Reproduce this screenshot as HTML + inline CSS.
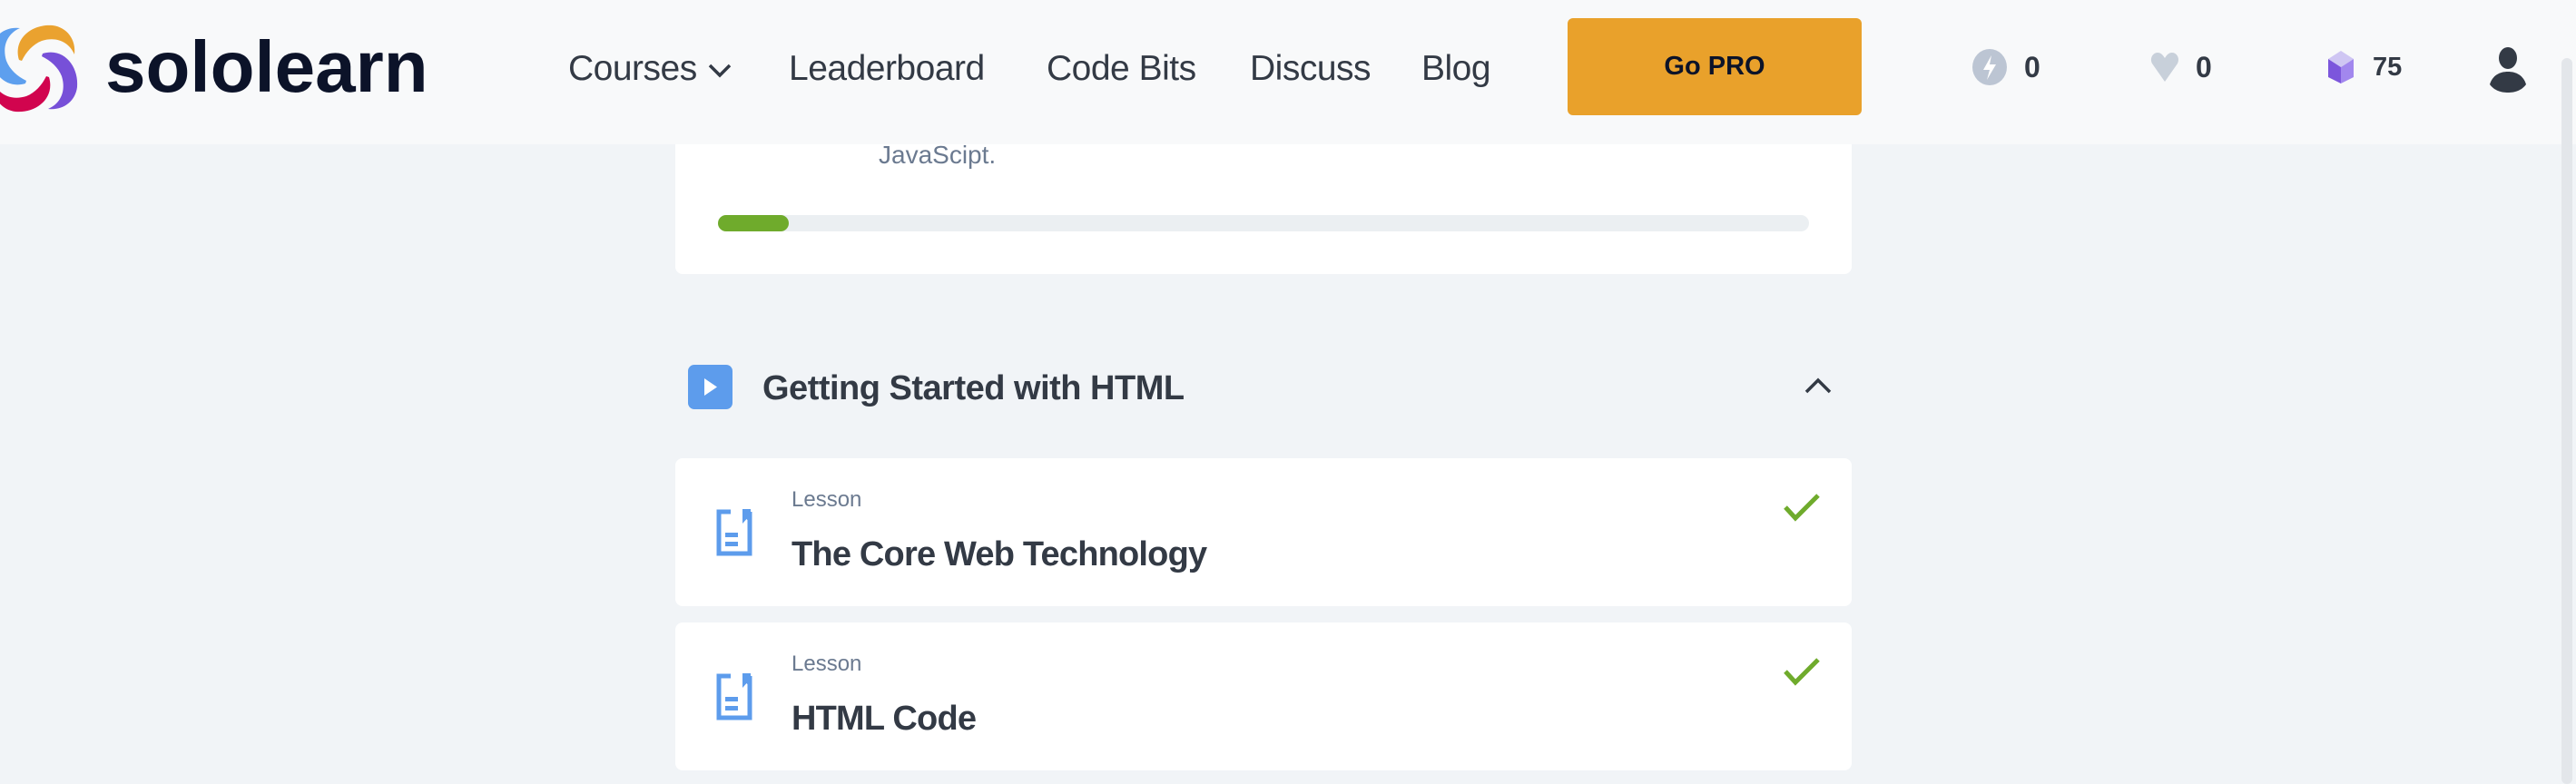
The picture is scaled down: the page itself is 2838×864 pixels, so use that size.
<!DOCTYPE html>
<html><head><meta charset="utf-8"><style>
*{margin:0;padding:0;box-sizing:border-box}
body{width:2838px;height:862px;overflow:hidden;background:#f1f4f7;font-family:"Liberation Sans",sans-serif;position:relative}
.hdr{position:absolute;left:0;top:0;width:2838px;height:159px;background:#f8f9fa}
.abs{position:absolute}
.nav{position:absolute;top:54px;font-size:39px;color:#333a45;letter-spacing:-0.5px}
.card{position:absolute;left:744px;width:1296px;background:#fff;border-radius:8px}
.lbl{position:absolute;left:128px;font-size:24px;color:#6b7a90}
.ttl{position:absolute;left:128px;font-size:38px;font-weight:bold;color:#333a45;letter-spacing:-0.8px}
</style></head><body>
<div class="hdr"></div>
<svg class="abs" style="left:0;top:0" width="100" height="140" viewBox="0 0 100 140">
<path d="M21,66 C14,42 36,26 58,28 C74,30 84,44 82,60 C76,46 62,40 46,45 C36,49 29,57 24,67 Z" fill="#eaa22f"/>
<path transform="rotate(90 37.5 75.5)" d="M21,66 C14,42 36,26 58,28 C74,30 84,44 82,60 C76,46 62,40 46,45 C36,49 29,57 24,67 Z" fill="#7750d8"/>
<path transform="rotate(180 37.5 75.5)" d="M21,66 C14,42 36,26 58,28 C74,30 84,44 82,60 C76,46 62,40 46,45 C36,49 29,57 24,67 Z" fill="#d1044e"/>
<path transform="rotate(270 37.5 75.5)" d="M21,66 C14,42 36,26 58,28 C74,30 84,44 82,60 C76,46 62,40 46,45 C36,49 29,57 24,67 Z" fill="#5d9fee"/>
</svg>
<div class="abs" style="left:116px;top:28px;font-size:80px;font-weight:bold;color:#0c1329;letter-spacing:0px">sololearn</div>
<div class="nav" style="left:626px">Courses <svg width="30" height="20" viewBox="0 0 30 20" style="vertical-align:middle"><path d="M4,4 L15,15 L26,4" fill="none" stroke="#333a45" stroke-width="3.5"/></svg></div>
<div class="nav" style="left:869px">Leaderboard</div>
<div class="nav" style="left:1153px">Code Bits</div>
<div class="nav" style="left:1377px">Discuss</div>
<div class="nav" style="left:1566px">Blog</div>
<div class="abs" style="left:1727px;top:20px;width:324px;height:107px;background:#e9a12b;border-radius:6px;text-align:center;line-height:107px;font-size:29px;font-weight:bold;color:#0c1329">Go PRO</div>
<svg class="abs" style="left:2172px;top:53px" width="40" height="42" viewBox="0 0 40 42"><ellipse cx="20" cy="21" rx="19" ry="20" fill="#bcc5d3"/><path d="M22,8 L13,24 L20,24 L17,35 L27,18 L20,18 Z" fill="#fff"/></svg>
<div class="abs" style="left:2230px;top:56px;font-size:32px;font-weight:bold;color:#333a45">0</div>
<svg class="abs" style="left:2368px;top:58px" width="34" height="34" viewBox="0 0 34 34"><path d="M17,32 L3,12 C0,6 4,0 9,0 C13,0 15,3 17,6 C19,3 21,0 25,0 C30,0 34,6 31,12 Z" fill="#c8d0da"/></svg>
<div class="abs" style="left:2419px;top:56px;font-size:32px;font-weight:bold;color:#333a45">0</div>
<svg class="abs" style="left:2563px;top:56px" width="32" height="36" viewBox="0 0 32 36"><path d="M16,0 L30,9 L16,18 L2,9 Z" fill="#cfc6f3"/><path d="M2,9 L16,18 L16,36 L2,29 Z" fill="#7c56dc"/><path d="M30,9 L16,18 L16,36 L30,29 Z" fill="#a287ee"/></svg>
<div class="abs" style="left:2614px;top:58px;font-size:29px;font-weight:bold;color:#333a45">75</div>
<svg class="abs" style="left:2740px;top:52px" width="46" height="50" viewBox="0 0 46 50"><ellipse cx="23" cy="12" rx="10" ry="12" fill="#333a45"/><path d="M3,41 C6,31 14,27 23,27 C32,27 40,31 43,41 C38,48 30,50 23,50 C16,50 8,48 3,41 Z" fill="#333a45"/></svg>
<div class="abs" style="left:2822px;top:64px;width:12px;height:800px;background:#e3e6ea;border-radius:6px"></div>
<div class="card" style="top:159px;height:143px;border-radius:0 0 8px 8px">
 <div class="abs" style="left:224px;top:-4px;font-size:28px;color:#6b7a90">JavaScipt.</div>
 <div class="abs" style="left:47px;top:78px;width:1202px;height:18px;background:#ebeff2;border-radius:9px"><div style="width:78px;height:18px;background:#6fab2c;border-radius:9px"></div></div>
</div>
<svg class="abs" style="left:758px;top:402px" width="49" height="49" viewBox="0 0 49 49"><rect width="49" height="49" rx="7" fill="#5d9cec"/><path d="M18,15 L32,24.5 L18,34 Z" fill="#fff"/></svg>
<div class="abs" style="left:840px;top:407px;font-size:38px;font-weight:bold;color:#333a45;letter-spacing:-0.5px">Getting Started with HTML</div>
<svg class="abs" style="left:1986px;top:414px" width="34" height="22" viewBox="0 0 34 22"><path d="M4,18 L17,5 L30,18" fill="none" stroke="#333a45" stroke-width="3.5"/></svg>
<div class="card" style="top:505px;height:163px">
 <svg class="abs" style="left:45px;top:56px" width="40" height="52" viewBox="0 0 40 52"><path d="M16,3 L3,3 L3,49 L37,49 L37,3" fill="none" stroke="#5d9cec" stroke-width="5"/><path d="M29,0 L38,0 L38,16 L33.5,11 L29,16 Z" fill="#5d9cec"/><rect x="10" y="26" width="14" height="5" fill="#5d9cec"/><rect x="10" y="36" width="14" height="5" fill="#5d9cec"/></svg>
 <div class="lbl" style="top:32px">Lesson</div>
 <div class="ttl" style="top:85px">The Core Web Technology</div>
 <svg class="abs" style="left:1220px;top:38px" width="42" height="32" viewBox="0 0 42 32"><path d="M3,16 L14,28 L39,3" fill="none" stroke="#6fab2c" stroke-width="5"/></svg>
</div>
<div class="card" style="top:686px;height:163px">
 <svg class="abs" style="left:45px;top:56px" width="40" height="52" viewBox="0 0 40 52"><path d="M16,3 L3,3 L3,49 L37,49 L37,3" fill="none" stroke="#5d9cec" stroke-width="5"/><path d="M29,0 L38,0 L38,16 L33.5,11 L29,16 Z" fill="#5d9cec"/><rect x="10" y="26" width="14" height="5" fill="#5d9cec"/><rect x="10" y="36" width="14" height="5" fill="#5d9cec"/></svg>
 <div class="lbl" style="top:32px">Lesson</div>
 <div class="ttl" style="top:85px">HTML Code</div>
 <svg class="abs" style="left:1220px;top:38px" width="42" height="32" viewBox="0 0 42 32"><path d="M3,16 L14,28 L39,3" fill="none" stroke="#6fab2c" stroke-width="5"/></svg>
</div>
</body></html>
